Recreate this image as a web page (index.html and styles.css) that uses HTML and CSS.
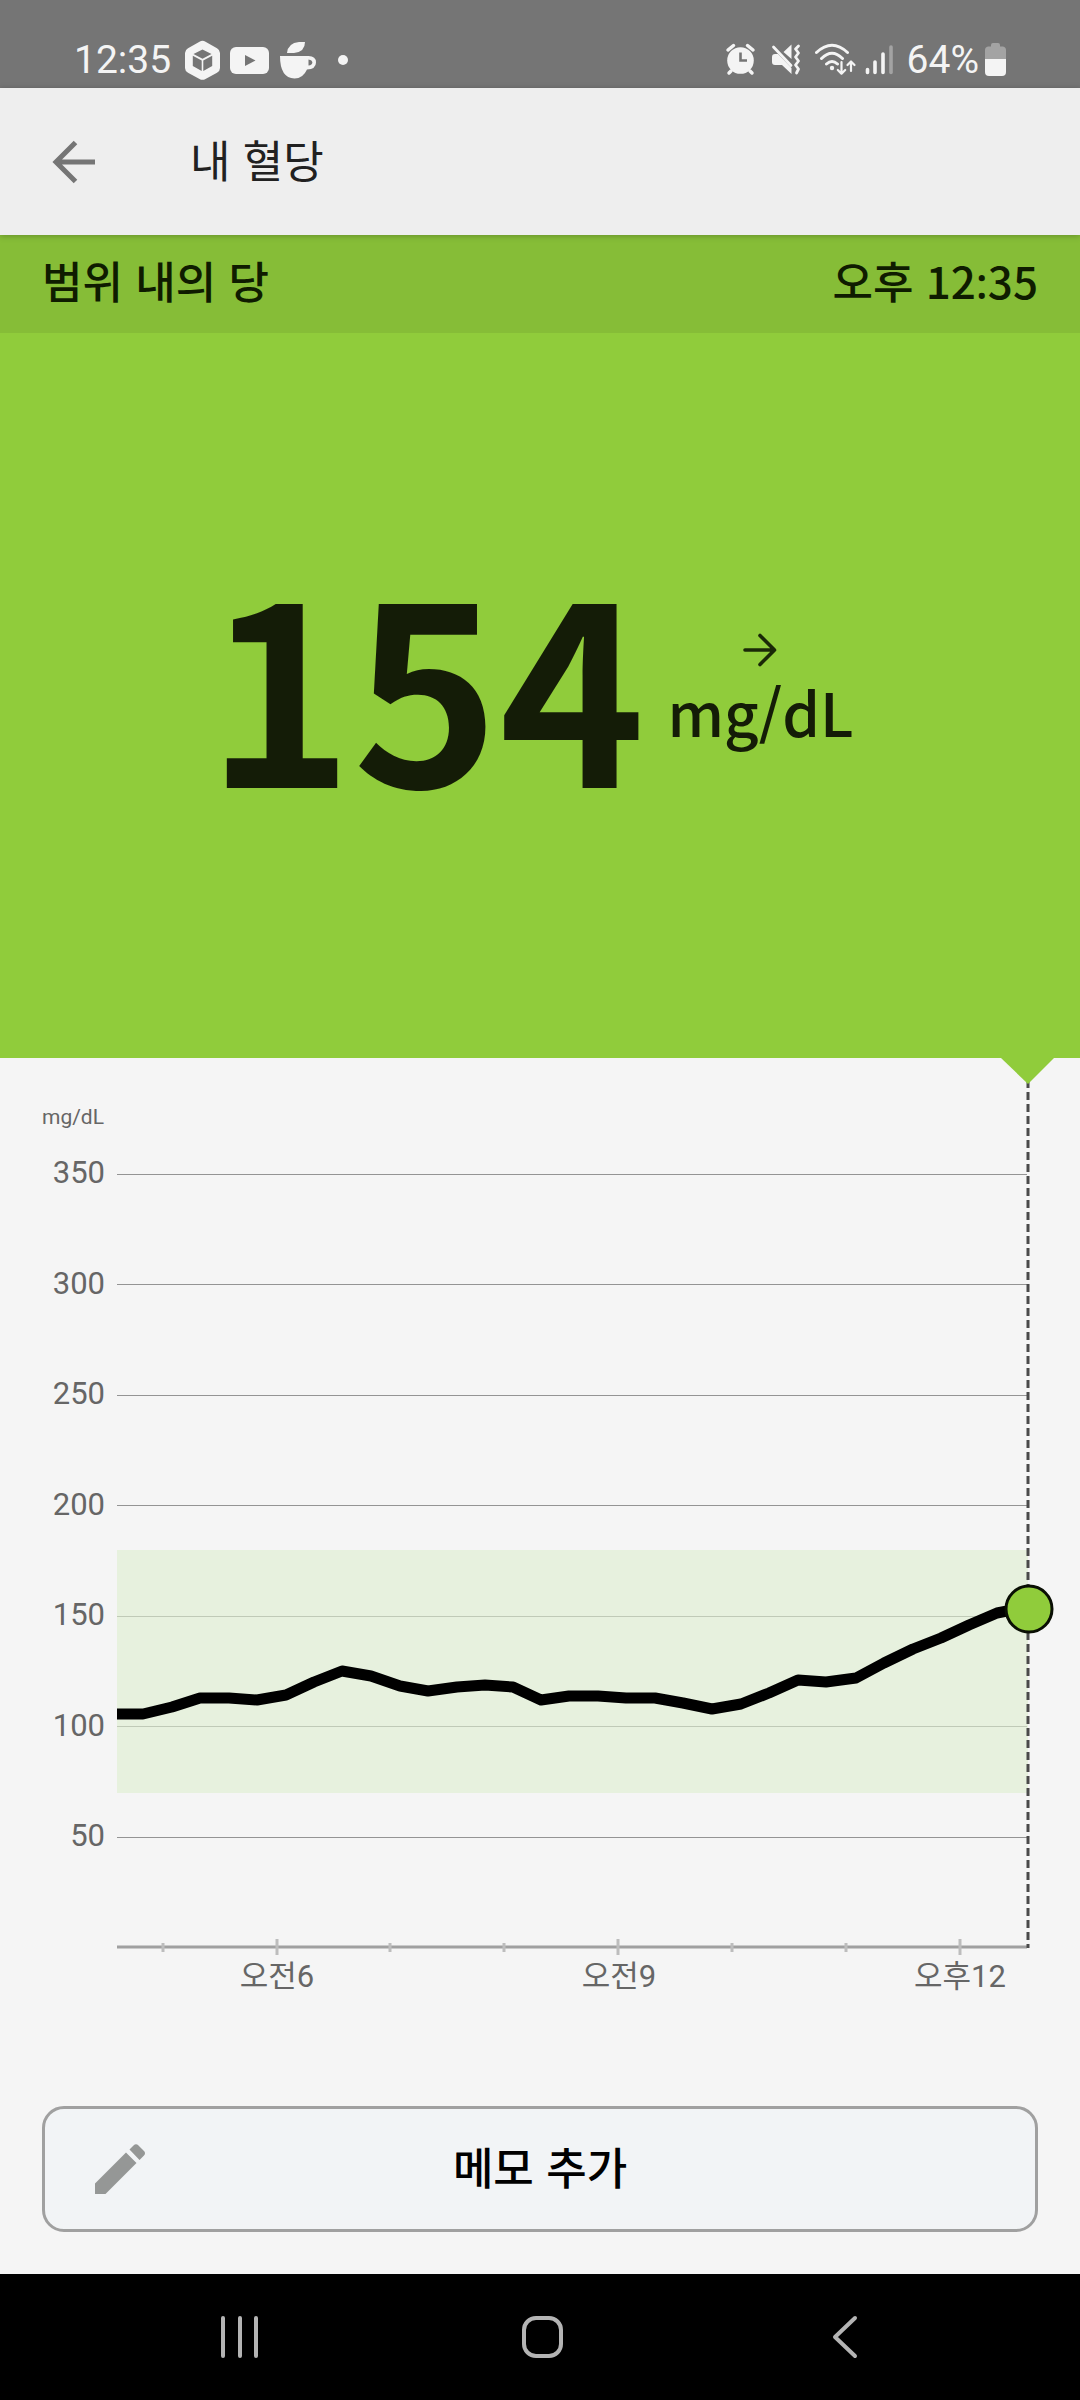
FILE: index.html
```html
<!DOCTYPE html>
<html lang="ko">
<head>
<meta charset="utf-8">
<meta name="viewport" content="width=device-width, initial-scale=1">
<title>내 혈당</title>
<link rel="stylesheet" href="styles.css">
</head>
<body>
<div class="status-bar">
  <div class="status-group">
    <span class="status-text">12:35</span>
    <div class="notifications">
      <svg width="36" height="40" viewBox="0 0 36 40" aria-hidden="true">
        <path fill="#f4f4f4" d="M15.500 1.700Q18.500 0 21.500 1.700L33 8.300Q36 10 36 13V28Q36 31 33 32.700L21.500 39Q18.500 40.700 15.500 39L4 32.700Q1 31 1 28V13Q1 10 4 8.300Z"/>
        <path fill="#757575" d="M18.500 9.500 27.500 14 18.500 18.700 9.500 14ZM8.800 15.800 17.700 20.500V31L8.800 26ZM28.200 15.800V26L19.300 31V20.500Z"/>
      </svg>
      <svg width="40" height="40" viewBox="0 0 40 40" aria-hidden="true">
        <rect x="0" y="7" width="39" height="27" rx="6" fill="#f4f4f4"/>
        <path fill="#757575" d="M15 15 25.500 20.500 15 26Z"/>
      </svg>
      <svg width="38" height="40" viewBox="0 0 38 40" aria-hidden="true">
        <path fill="#f4f4f4" d="M7 13Q8 3 19 2H25Q25 12 14 13ZM0 16H28.500Q36 16 36 22.500 36 29 27 29.500 23 38.500 14.500 38.500 0 38 0 16Z"/>
        <path fill="#757575" d="M28.500 19.500Q32.300 20 32.300 22.500T28.500 25.500Z"/>
      </svg>
    </div>
    <span class="more-dot"></span>
  </div>
  <div class="status-group status-right">
    <svg width="32" height="40" viewBox="0 0 32 40" aria-hidden="true">
      <circle cx="15.500" cy="20.500" r="13.300" fill="#f4f4f4"/>
      <path d="M3 10 8.500 5.500M28 10 22.500 5.500M6 31 4 33M25 31 27 33" stroke="#f4f4f4" stroke-width="3.500" stroke-linecap="round"/>
      <path d="M15.500 12.500V20.500H22" fill="none" stroke="#757575" stroke-width="2.600"/>
    </svg>
    <svg width="30" height="40" viewBox="0 0 30 40" aria-hidden="true">
      <path fill="#f4f4f4" d="M1 17Q1 14 4 14H7L20.500 28V34L11 25H4Q1 25 1 22ZM20.500 4.500V19L12.500 12Z"/>
      <path d="M2.500 7 20 25.500M27.500 6 24.500 9 27.500 13 24.500 17 27.500 21 24.500 25 27.500 29 25.500 33" fill="none" stroke="#f4f4f4" stroke-width="2.800" stroke-linecap="round" stroke-linejoin="round"/>
    </svg>
    <div class="radio">
      <svg width="42" height="40" viewBox="0 0 42 40" aria-hidden="true">
        <path d="M1.500 12.500Q17 -2 32.500 12.500M6.500 18.500Q17 8 27.500 18.500M11.500 24Q17 19 22.500 24" fill="none" stroke="#f4f4f4" stroke-width="3" stroke-linecap="round"/>
        <circle cx="17" cy="28" r="2.200" fill="#f4f4f4"/>
        <path d="M26.500 22V33.500M22.800 30 26.500 33.700 30.200 30M36 31V22M32.500 25 36 21.500 39.500 25" fill="none" stroke="#f4f4f4" stroke-width="2.200" stroke-linecap="round" stroke-linejoin="round"/>
      </svg>
      <svg width="28" height="40" viewBox="0 0 28 40" aria-hidden="true">
        <path d="M2.500 29.500V32.500M10 22V32.500M18 14V32.500" stroke="#f4f4f4" stroke-width="3.600" stroke-linecap="round"/>
        <path d="M26 7V32.500" stroke="#a3a3a3" stroke-width="3.600" stroke-linecap="round"/>
      </svg>
    </div>
    <div class="battery">
      <span class="status-text">64%</span>
      <svg width="21" height="40" viewBox="0 0 21 40" aria-hidden="true">
        <path fill="#a3a3a3" d="M6 5Q6 3 8 3H13Q15 3 15 5V6.500H18Q21 7 21 10V19H0V10Q0 7 3 6.500H6Z"/>
        <path fill="#f4f4f4" d="M0 19H21V32Q21 36 17 36H4Q0 36 0 32Z"/>
      </svg>
    </div>
  </div>
</div>

<header class="app-bar">
  <button class="back" type="button" aria-label="뒤로">
    <svg width="44" height="44" viewBox="0 0 44 44" aria-hidden="true">
      <path d="M43 22H4M23.500 2.500 4 22 23.500 41.500" fill="none" stroke="#757575" stroke-width="5"/>
    </svg>
  </button>
  <h1 class="title">내 혈당</h1>
</header>

<main class="content">
  <section class="reading">
    <div class="reading-head">
      <span>범위 내의 당</span>
      <time datetime="12:35">오후 12<span class="time-sep">:</span>35</time>
    </div>
    <div class="reading-body">
      <span class="value">154</span>
      <div class="unit">
        <svg width="34" height="34" viewBox="0 0 34 34" aria-hidden="true">
          <path d="M2 17H31M17 2.500 31.500 17 17 31.500" fill="none" stroke="#1a2807" stroke-width="3.600" stroke-linecap="round" stroke-linejoin="round"/>
        </svg>
        <span>mg/dL</span>
      </div>
    </div>
  </section>

  <svg class="chart" viewBox="0 0 1080 960" role="img" aria-label="혈당 그래프">
    <g class="grid">
      <path d="M117 116H1027M117 226H1027M117 337H1027M117 447H1027M117 558H1027M117 668H1027M117 779H1027"/>
    </g>
    <rect class="range" x="117" y="492" width="911" height="243"/>
    <path class="axis" d="M117 889H1027"/>
    <path class="tick" d="M163 885V894M277 881V897M390 885V894M504 885V894M618 881V897M732 885V894M846 885V894M960 881V897"/>
    <path class="now" d="M1028 22V890"/>
    <path class="pointer" d="M1001 0H1054L1028 26Z"/>
    <polyline class="series" points="117,656 143,656 172,649 200,640 229,640 257,642 286,637 314,624 342,613 371,618 400,628 428,633 457,629 485,627 513,629 541,642 569,638 598,638 626,640 655,640 683,645 712,651 741,646 769,635 798,622 826,624 856,620 884,605 913,591 941,580 969,567 997,555 1028,549"/>
    <circle class="current" cx="1029" cy="551" r="23"/>
    <g class="y-labels">
      <text class="axis-unit" x="104" y="66">mg/dL</text>
      <text x="105" y="125">350</text>
      <text x="105" y="236">300</text>
      <text x="105" y="346">250</text>
      <text x="105" y="457">200</text>
      <text x="105" y="567">150</text>
      <text x="105" y="678">100</text>
      <text x="105" y="788">50</text>
    </g>
    <g class="x-labels">
      <text x="277" y="929">오전6</text>
      <text x="619" y="929">오전9</text>
      <text x="960" y="929">오후12</text>
    </g>
  </svg>

  <div class="actions">
    <button class="note" type="button">
      <svg width="50" height="50" viewBox="0 0 50 50" aria-hidden="true">
        <path fill="#959796" d="M0 39.500 31 8.500 41.500 19 10.500 50H0ZM34.500 5.500 38.500 1.500Q41 -1 43.500 1.500L49 7Q51 9 49 11.500L44.500 16Z"/>
      </svg>
      <span class="note-label">메모 추가</span>
    </button>
  </div>
</main>

<nav class="nav-bar">
  <button type="button" aria-label="최근 앱">
    <svg width="44" height="44" viewBox="0 0 44 44" aria-hidden="true">
      <path d="M5 3V41M22 3V41M38 3V41" stroke="#b4b4b4" stroke-width="4" stroke-linecap="round"/>
    </svg>
  </button>
  <button type="button" aria-label="홈">
    <svg width="44" height="44" viewBox="0 0 44 44" aria-hidden="true">
      <rect x="3" y="3" width="37" height="38" rx="12" fill="none" stroke="#b4b4b4" stroke-width="4"/>
    </svg>
  </button>
  <button type="button" aria-label="뒤로 가기">
    <svg width="44" height="44" viewBox="0 0 44 44" aria-hidden="true">
      <path d="M32 3 12 22 32 41" fill="none" stroke="#b4b4b4" stroke-width="4" stroke-linecap="round" stroke-linejoin="round"/>
    </svg>
  </button>
</nav>
</body>
</html>
```
FILE: styles.css
```css
* {
  box-sizing: border-box;
}

body {
  margin: 0;
  min-height: 100vh;
  display: flex;
  flex-direction: column;
  background: #f5f5f5;
  font-family: "Noto Sans CJK KR", sans-serif;
}

button {
  margin: 0;
  padding: 0;
  border: 0;
  background: none;
  font: inherit;
  color: inherit;
}

svg {
  display: block;
  flex: none;
}

/* Status bar */
.status-bar {
  display: flex;
  justify-content: space-between;
  padding: 32px 74px 0;
  height: 88px;
  background: #757575;
  color: #f4f4f4;
}

.status-group,
.notifications,
.radio,
.battery {
  display: flex;
  align-items: center;
}

.notifications {
  gap: 10px;
  margin-left: 13px;
}

.status-right {
  gap: 14px;
}

.radio {
  gap: 8px;
}

.battery {
  gap: 6px;
}

.status-text {
  font-family: Roboto, sans-serif;
  font-size: 39px;
  line-height: 44px;
}

.more-dot {
  width: 10px;
  height: 10px;
  margin-left: 20px;
  border-radius: 50%;
  background: #f4f4f4;
}

/* App bar */
.app-bar {
  display: flex;
  align-items: center;
  gap: 94px;
  height: 147px;
  padding: 0 52px;
  background: #eee;
  box-shadow: 0 1px 6px rgba(0, 0, 0, 0.25);
  z-index: 1;
}

.title {
  margin: 0;
  padding-bottom: 6px;
  font-size: 44px;
  line-height: 64px;
  font-weight: 400;
  color: #212121;
}

/* Current reading */
.content,
.reading {
  flex: 1;
  display: flex;
  flex-direction: column;
}

.reading {
  background: #90cc3b;
  color: #141c07;
}

.reading-head {
  display: flex;
  justify-content: space-between;
  padding: 13px 42px 19px;
  background: #86bd37;
  color: #0f1c00;
  font-size: 44px;
  line-height: 64px;
  font-weight: 500;
}

/* The Korean face draws its colon high; this one sits on the baseline */
.time-sep {
  font-family: "Noto Sans", sans-serif;
}

.reading-body {
  flex: 1;
  display: flex;
  align-items: center;
  justify-content: center;
  gap: 22px;
  padding: 0 20px 4px 0;
}

.value {
  padding-bottom: 28px;
  font-size: 248px;
  line-height: 300px;
  font-weight: 700;
}

.unit {
  display: flex;
  flex-direction: column;
  align-items: center;
  font-size: 60px;
  line-height: 88px;
  font-weight: 500;
}

/* Chart */
.chart {
  width: 100%;
  height: auto;
  font-family: Roboto, "Noto Sans CJK KR", sans-serif;
  font-size: 31px;
}

.grid {
  stroke: #949494;
  stroke-width: 1;
  shape-rendering: crispEdges;
}

.range {
  fill: #deefcf;
  fill-opacity: 0.6;
}

.axis {
  stroke: #a0a0a0;
  stroke-width: 3;
}

.tick {
  stroke: #bdbdbd;
  stroke-width: 3;
}

.now {
  stroke: #4a4a4a;
  stroke-width: 3;
  stroke-dasharray: 8 4;
}

.pointer {
  fill: #90cc3b;
}

.series {
  fill: none;
  stroke: #000;
  stroke-width: 11;
  stroke-linejoin: round;
}

.current {
  fill: #90cc3b;
  stroke: #0a0f04;
  stroke-width: 3;
}

.y-labels,
.x-labels {
  fill: #666;
}

.y-labels {
  text-anchor: end;
}

.x-labels {
  text-anchor: middle;
}

.axis-unit {
  font-size: 21px;
}

/* Note button */
.actions {
  display: flex;
  padding: 88px 42px 42px;
}

.note {
  flex: 1;
  display: grid;
  grid-template-columns: 50px 1fr 50px;
  align-items: center;
  height: 126px;
  padding: 0 50px;
  border: 3px solid #a0a0a0;
  border-radius: 22px;
  background: #f2f4f6;
  color: #000;
  font-size: 44px;
  line-height: 64px;
  font-weight: 500;
}

.note-label {
  padding-bottom: 6px;
}

/* System navigation */
.nav-bar {
  display: flex;
  justify-content: space-between;
  align-items: center;
  height: 126px;
  padding: 0 213px 0 218px;
  background: #000;
}
```
